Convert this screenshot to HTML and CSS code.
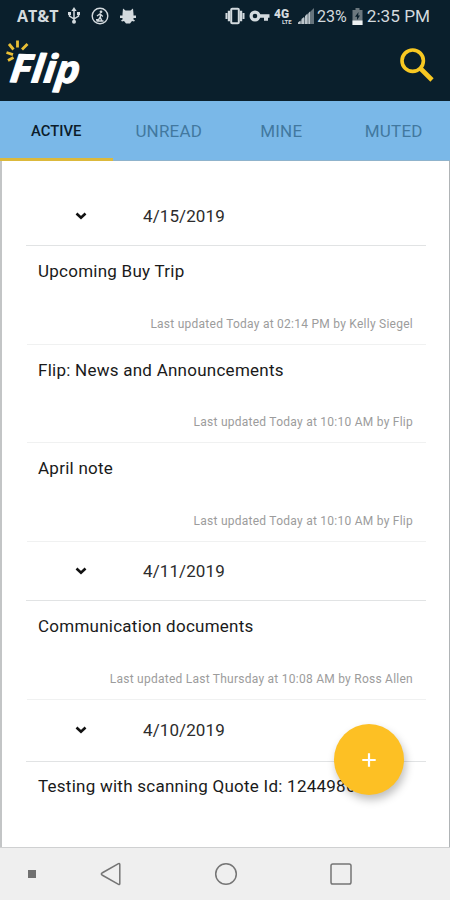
FILE: index.html
```html
<!DOCTYPE html>
<html lang="en">
<head>
  <meta charset="UTF-8">
  <meta name="viewport" content="width=device-width, initial-scale=1.0">
  <title>Flip</title>
  <link rel="stylesheet" href="styles.css">
</head>
<body>
  <div class="status-bar">
    <span class="carrier">AT&amp;T</span>
    <svg class="icon-usb" width="14" height="18" viewBox="0 0 14 18" fill="none" stroke="currentColor" stroke-width="1.5">
      <path d="M7 3v11M2.5 6.5v2.5L7 12M11.5 6.5V9L7 12"/>
      <path d="M7 0l2.6 4H4.4z" fill="currentColor" stroke="none"/>
      <circle cx="7" cy="14.7" r="2" fill="currentColor" stroke="none"/>
      <path d="M1 5h3v3H1zM10 5h3v3h-3z" fill="currentColor" stroke="none"/>
    </svg>
    <svg class="icon-run" width="18" height="18" viewBox="0 0 18 18" fill="none" stroke="currentColor" stroke-width="1.4">
      <circle cx="9" cy="9" r="7.8"/>
      <circle cx="10" cy="4.8" r="1.4" fill="currentColor" stroke="none"/>
      <path d="M9.3 6.5v4M6 9l3-2.2 2.8 2.6M9.3 10.4l1.6 3.6M9 10.5l-1.5 2.2H5M5.5 14h7"/>
    </svg>
    <svg class="icon-debug" width="16" height="16" viewBox="0 0 16 16" fill="currentColor">
      <path d="M3 .5l2.500 2h5L13 .5l.5 5.500v1.500H16V10h-2.500v1.500l1.500 1-1 1-2-.5-2 2.500H6L4 13l-2 .5-1-1 1.500-1V10H0V7.500h2.500V6z"/>
    </svg>
    <div class="status-right">
      <svg class="icon-vibrate" width="20" height="18" viewBox="0 0 20 18" fill="none" stroke="currentColor">
        <rect x="6.200" y="1.800" width="7.600" height="14.400" rx="1" stroke-width="2"/>
        <path d="M4 3.800v10.400M16 3.800v10.400" stroke-width="2.400"/>
        <path d="M1.500 6v6M18.500 6v6" stroke-width="2"/>
      </svg>
      <svg class="icon-key" width="21" height="12" viewBox="0 0 21 12">
        <circle cx="6" cy="6" r="3.9" fill="none" stroke="currentColor" stroke-width="3.2"/>
        <path d="M10 4.2h10.5v3.6H19v3h-4v-3h-5z" fill="currentColor"/>
      </svg>
      <svg class="icon-network" width="20" height="18" viewBox="0 0 20 18">
        <text x="0" y="10.500" class="net-big" textLength="15" lengthAdjust="spacingAndGlyphs">4G</text>
        <text x="8" y="17.200" class="net-small">LTE</text>
      </svg>
      <svg class="icon-signal" width="16" height="16" viewBox="0 0 16 16">
        <path d="M0 16L16 0v16z" fill="#66747d"/>
        <path d="M0 16v-1.500l2.500-2V16zM3.500 16v-5L6 9v7zM7 16V8l2.500-2.500V16zM10.500 16V5l1.500-1.500V16z" fill="#bcc5cb"/>
      </svg>
      <span class="percent">23%</span>
      <svg class="icon-battery" width="11" height="17" viewBox="0 0 11 17">
        <path d="M3.500 0h4v2H10.500v15H.5V2h3z" fill="#6b777e"/>
        <path d="M6.500 4L3 8.800h2V12l3-4.500H6.200z" fill="#0a1f2c"/>
        <path d="M.5 12.500h10V17H.5z" fill="#eef1f2"/>
      </svg>
      <span class="clock">2:35 PM</span>
    </div>
  </div>

  <header class="header">
    <svg class="logo" width="90" height="62" viewBox="0 0 90 62">
      <g stroke="#e9bf35" stroke-width="2.800">
        <path d="M17.500 2.500v7M9 6l4.500 5.500M6.500 14.500l6.500 2.200M8 22.500l5.500-3M27.500 6l-5.500 5.500"/>
      </g>
      <text x="0" y="0" transform="translate(9 44) rotate(1) skewX(-5)" class="logo-text" textLength="70" lengthAdjust="spacingAndGlyphs">Flip</text>
    </svg>
    <svg class="icon-search" width="34" height="34" viewBox="0 0 34 34" fill="none" stroke="#f8c822">
      <circle cx="12.700" cy="12.700" r="10.700" stroke-width="3.600"/>
      <path d="M20.500 20.500L32 32" stroke-width="4.600"/>
    </svg>
  </header>

  <nav class="tabs">
    <div class="tab active"><span>ACTIVE</span></div>
    <div class="tab"><span>UNREAD</span></div>
    <div class="tab"><span>MINE</span></div>
    <div class="tab"><span>MUTED</span></div>
  </nav>

  <main class="content">
    <div class="date-row first">
      <svg class="chevron" width="12" height="8" viewBox="0 0 12 8"><path d="M1.500 1.500L6 5.800l4.500-4.300"/></svg>
      <span class="date">4/15/2019</span>
    </div>
    <div class="note">
      <span class="title">Upcoming Buy Trip</span>
      <span class="updated">Last updated Today at 02:14 PM by Kelly Siegel</span>
    </div>
    <div class="note">
      <span class="title">Flip: News and Announcements</span>
      <span class="updated">Last updated Today at 10:10 AM by Flip</span>
    </div>
    <div class="note">
      <span class="title">April note</span>
      <span class="updated">Last updated Today at 10:10 AM by Flip</span>
    </div>

    <div class="date-row">
      <svg class="chevron" width="12" height="8" viewBox="0 0 12 8"><path d="M1.500 1.500L6 5.800l4.500-4.300"/></svg>
      <span class="date">4/11/2019</span>
    </div>
    <div class="note">
      <span class="title">Communication documents</span>
      <span class="updated">Last updated Last Thursday at 10:08 AM by Ross Allen</span>
    </div>

    <div class="date-row last">
      <svg class="chevron" width="12" height="8" viewBox="0 0 12 8"><path d="M1.500 1.500L6 5.800l4.500-4.300"/></svg>
      <span class="date">4/10/2019</span>
    </div>
    <div class="note cut">
      <span class="title">Testing with scanning Quote Id: 1244986</span>
    </div>

    <button class="fab" aria-label="Add">
      <svg width="14" height="14" viewBox="0 0 14 14"><path d="M7 .3v13.400M.3 7h13.400" stroke="#fff" stroke-width="2.200"/></svg>
    </button>
  </main>

  <footer class="nav-bar">
    <span class="nav-dot"></span>
    <svg class="nav-back" width="22" height="24" viewBox="0 0 22 24"><path d="M18.500 1.600L2 11q-1.300 1 0 2l16.500 9.400q1.300.5 1.300-1V2.600q0-1.500-1.300-1z"/></svg>
    <svg class="nav-home" width="24" height="24" viewBox="0 0 24 24"><circle cx="12" cy="12" r="10.300"/></svg>
    <svg class="nav-recent" width="24" height="24" viewBox="0 0 24 24"><rect x="2" y="2" width="20" height="20" rx="1.800"/></svg>
  </footer>
</body>
</html>
```
FILE: styles.css
```css
* {
  box-sizing: border-box;
}

body {
  margin: 0;
  width: 450px;
  height: 900px;
  display: flex;
  flex-direction: column;
  overflow: hidden;
  background-color: #fff;
  font-family: Roboto, sans-serif;
}

/* Phone status bar */
.status-bar {
  height: 34px;
  display: flex;
  align-items: center;
  padding: 0 20px 2px 17px;
  background-color: #0a1f2c;
  color: #d3dade;
}

.carrier {
  width: 43px;
  font-family: "Open Sans", sans-serif;
  font-size: 16px;
  font-weight: 700;
}

.icon-usb {
  margin-left: 7px;
}

.icon-run {
  margin-left: 10px;
}

.icon-debug {
  margin-left: 11px;
}

.status-right {
  flex: 1;
  display: flex;
  align-items: center;
  justify-content: flex-end;
}

.icon-key {
  margin-left: 4px;
}

.icon-network {
  margin-left: 4px;
  fill: currentColor;
}

.net-big {
  font-size: 13px;
  font-weight: 900;
}

.net-small {
  font-size: 6px;
  font-weight: 700;
}

.icon-signal {
  margin-left: 4px;
}

.percent {
  margin-left: 3px;
  font-size: 16px;
}

.icon-battery {
  margin-left: 5px;
}

.clock {
  margin-left: 4px;
  font-size: 17.2px;
}

/* Header */
.header {
  height: 67px;
  display: flex;
  justify-content: space-between;
  padding: 4px 16px 0 0;
  background-color: #0a1f2c;
}

.logo-text {
  font-family: "Open Sans", sans-serif;
  font-size: 39px;
  font-weight: 700;
  font-style: italic;
  fill: #fff;
  stroke: #fff;
  stroke-width: 1;
  stroke-linejoin: round;
}

.icon-search {
  margin-top: 10px;
}

/* Tabs */
.tabs {
  height: 60px;
  display: flex;
  background-color: #7ab8e8;
}

.tab {
  flex: 1;
  display: flex;
  align-items: center;
  justify-content: center;
  padding-top: 1px;
  border-bottom: 1px solid #8fb3cc;
  font-size: 17px;
  font-weight: 400;
  letter-spacing: 0.2px;
  color: #42789f;
}

.tab.active {
  border-bottom: 3px solid #dcb93c;
  padding-top: 3px;
  font-size: 14.8px;
  font-weight: 500;
  letter-spacing: 0;
  color: #0c1c2a;
}

/* Notes list */
.content {
  position: relative;
  height: 686px;
  padding: 0 23px 0 25px;
  border-left: 2px solid #c3c5c6;
  border-right: 1px solid #b0b4b6;
}

.date-row {
  height: 59.500px;
  margin-left: -1px;
  display: flex;
  align-items: center;
  border-bottom: 1px solid #e1e3e4;
}

.date-row.first {
  height: 85px;
  padding-top: 25px;
}

.date-row.last {
  height: 62px;
}

.chevron {
  margin-left: 49px;
  fill: none;
  stroke: #111;
  stroke-width: 2.600;
}

.date {
  margin-left: 56px;
  font-size: 17px;
  letter-spacing: 0.100px;
  color: #2c2c2c;
}

.note {
  height: 98.500px;
  display: flex;
  flex-direction: column;
  justify-content: space-between;
  padding: 15px 13px 13px 11px;
  border-bottom: 1px solid #f0f1f1;
}

.note.cut {
  padding-top: 14px;
  border-bottom: 0;
  white-space: nowrap;
}

.title {
  font-size: 17px;
  line-height: 20px;
  letter-spacing: 0.25px;
  color: #1a1a1a;
}

.updated {
  align-self: flex-end;
  font-size: 12px;
  line-height: 14px;
  letter-spacing: 0.25px;
  color: #9c9c9c;
}

/* Floating add button */
.fab {
  position: absolute;
  top: 563px;
  right: 45px;
  width: 70px;
  height: 71px;
  display: flex;
  align-items: center;
  justify-content: center;
  padding: 0;
  border: none;
  border-radius: 50%;
  background-color: #fdc024;
  box-shadow: 2px 5px 9px rgba(0, 0, 0, 0.25);
}

/* Phone navigation */
.nav-bar {
  height: 53px;
  display: flex;
  align-items: center;
  padding-left: 28px;
  border-top: 1px solid #cfd0d1;
  background-color: #efefef;
}

.nav-bar svg {
  fill: none;
  stroke: #757575;
  stroke-width: 1.500;
}

.nav-dot {
  width: 8px;
  height: 8px;
  background-color: #707070;
}

.nav-back {
  margin-left: 64px;
}

.nav-home {
  margin-left: 92px;
}

.nav-recent {
  margin-left: 91px;
}
```
